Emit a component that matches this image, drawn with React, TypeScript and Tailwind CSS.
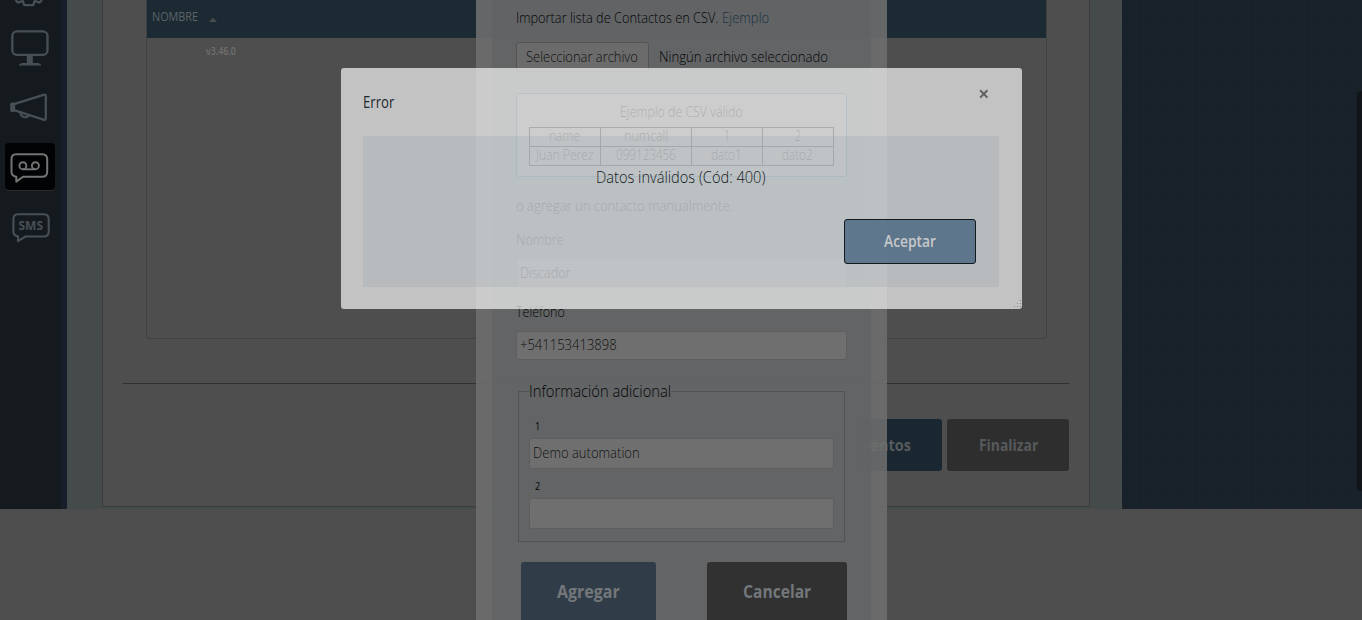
import { useLayoutEffect, useRef, useState, type ReactNode } from "react";

/** A line of text condensed horizontally so that it fills the given width. */
function Fit({ w, className = "", children }: { w: number; className?: string; children: ReactNode }) {
  const ref = useRef<HTMLSpanElement>(null);
  const [scale, setScale] = useState(1);
  useLayoutEffect(() => {
    if (ref.current) setScale(w / ref.current.offsetWidth);
  }, [w]);
  return (
    <span className={`inline-flex shrink-0 whitespace-nowrap ${className}`} style={{ width: w }}>
      <span ref={ref} className="inline-block origin-left shrink-0" style={{ transform: `scaleX(${scale})` }}>
        {children}
      </span>
    </span>
  );
}

function Sidebar() {
  return (
    <nav className="relative h-full w-[61px] shrink-0 bg-[#141a1e]">
      <svg width="61" height="260" viewBox="0 0 61 260" fill="none" stroke="#495055" strokeWidth="2.3" strokeLinejoin="round">
        <path d="M15.5 0l2.2 2.6 5-1.6 1.6 4.1h8.8l1.6-4.1 5 1.6L42 0" />
        <rect x="12.3" y="31.4" width="35.2" height="23.4" rx="4.5" />
        <path d="M29.8 56v8" strokeWidth="6" />
        <path d="M18.5 65.5c1-2 3-2.5 5-2.5h13c2 0 4 .5 5 2.5z" fill="#495055" stroke="none" />
        <path d="M14 104.2L43.5 94.8q2.3-.6 2.3 1.2v22.6q0 1.8-2.3 1.1L14 110.2z" />
        <path d="M10.2 104q0-1.5 2-1.5H14v9.5h-1.8q-2 0-2-1.6z" fill="#495055" stroke="none" />
        <path d="M20.4 112.5c.4 5.8 8 5.8 8.6 2.3" />
        <rect x="5" y="144" width="50" height="47" rx="4" fill="#282a2b" stroke="none" />
        <rect x="5" y="143" width="50" height="47" rx="4" fill="#020304" stroke="none" />
        <path
          d="M16 154.2h26.2q5 0 5 5v12.6q0 5-5 5H23l-6.7 4.8v-4.9q-4.8-.6-4.8-4.9v-12.6q0-5 4.5-5z"
          stroke="#747474"
          strokeWidth="2"
        />
        <g stroke="#747474" strokeWidth="1.9">
          <circle cx="22.9" cy="165.7" r="3.5" />
          <circle cx="35.4" cy="165.7" r="3.5" />
          <path d="M22.9 169.3h12.5" />
        </g>
        <path d="M17.8 214.3h26q4.9 0 4.9 5v12.2q0 5-4.9 5H25.5l-7.5 4.6v-4.7q-4.6-.7-4.6-4.9v-12.2q0-5 4.4-5z" strokeWidth="2.1" />
      </svg>
      <Fit w={25} className="absolute left-[18.5px] top-[217px] text-[12px]/[17px] font-bold text-[#495055]">
        SMS
      </Fit>
    </nav>
  );
}

function Page() {
  return (
    <div className="flex h-[509px] w-full bg-[#18202a]">
      <Sidebar />
      <div className="w-1.5 shrink-0 bg-[#181f2b]" />
      <main className="flex w-[1055px] shrink-0 bg-[#454a4a] pl-[35px]">
        <section className="h-[507px] w-[988px] border border-t-0 border-[#3b3d3d] bg-[#4e4e4e] px-5">
          <div className="ml-[23px] h-[339px] w-[901px] rounded-b border border-t-0 border-[#414141]">
            <div className="flex h-[38px] items-center bg-[#1c2a33] pb-1 pl-[5px] text-xs text-[#5d6468]">
              <Fit w={46}>NOMBRE</Fit>
              <svg width="8" height="4" className="ml-[11px] mt-[5px]">
                <path d="M0 4L4 0l4 4z" fill="#4b4e4e" />
              </svg>
            </div>
            <div className="flex pl-[59px] pt-1.5 text-[10px]/[14px] font-semibold text-[#707070]">
              <Fit w={30}>v3.46.0</Fit>
            </div>
          </div>
          <div className="mt-11 h-px bg-[#303030]" />
          <div className="mt-[35px] flex h-[52px] justify-end gap-[5px] text-base font-bold text-[#565a5c]">
            <div className="flex w-[81px] items-center justify-end rounded-[3px] bg-[#1a2731] pr-[31px]">
              <Fit w={57}>Eventos</Fit>
            </div>
            <div className="flex w-[122px] items-center justify-center rounded-[3px] bg-[#2e2e2e]">
              <Fit w={59}>Finalizar</Fit>
            </div>
          </div>
        </section>
      </main>
      <aside className="flex grow justify-end bg-[repeating-linear-gradient(0deg,#ffffff02_0_1px,transparent_1px_11px),repeating-linear-gradient(90deg,#ffffff02_0_1px,transparent_1px_7px)] pt-[91px]">
        <div className="h-[400px] w-[5px] rounded-l-sm bg-[#121518]" />
      </aside>
    </div>
  );
}

const cell = "flex items-center justify-center border-b border-r border-black pb-0.5";

function ContactForm() {
  return (
    <div className="absolute left-[476px] top-0 h-[620px] w-[411px] overflow-hidden bg-[#6e6e6ee0] px-4">
      <div className="flex h-full w-[379px] flex-col bg-[#606365cc] pl-[23.5px] pr-6 pt-px text-[15px] font-light text-[#050505] [&>*]:shrink-0">
        <div className="flex h-[34px] items-center gap-1 pb-0.5">
          <Fit w={202}>Importar lista de Contactos en CSV.</Fit>
          <Fit w={47} className="text-[#1a3243]">Ejemplo</Fit>
        </div>
        <div className="mt-[7px] flex h-[30px] items-center">
          <div className="mr-[10px] flex h-[30px] w-[133px] shrink-0 items-center justify-center rounded-[3px] border border-[#545454] bg-[#6b6b6b] pb-0.5 text-[#111111]">
            <Fit w={112}>Seleccionar archivo</Fit>
          </div>
          <Fit w={169} className="pb-0.5">Ningún archivo seleccionado</Fit>
        </div>
        <div className="mt-[21px] flex h-[84px] w-[331px] flex-col items-center rounded-[3px] border border-[#26485a] bg-[#707070] pt-2 text-[14.5px] text-black">
          <div className="flex h-[22px] items-center pb-0.5">
            <Fit w={123}>Ejemplo de CSV válido</Fit>
          </div>
          <div className="mt-[3px] grid h-[39px] w-[305px] shrink-0 grid-cols-[71px_91px_71px_71px] grid-rows-[19px_19px] border-l border-t border-black text-[14px]/[16px]">
            <div className={cell}><Fit w={31}>name</Fit></div>
            <div className={cell}><Fit w={44}>numcall</Fit></div>
            <div className={cell}><Fit w={6}>1</Fit></div>
            <div className={cell}><Fit w={6}>2</Fit></div>
            <div className={cell}><Fit w={58}>Juan Perez</Fit></div>
            <div className={cell}><Fit w={60}>099123456</Fit></div>
            <div className={cell}><Fit w={31}>dato1</Fit></div>
            <div className={cell}><Fit w={31}>dato2</Fit></div>
          </div>
        </div>
        <div className="mt-[17px] flex h-6 items-center pb-0.5 text-black"><Fit w={217}>o agregar un contacto manualmente.</Fit></div>
        <div className="mt-[10px] flex h-6 items-center pb-0.5 text-black"><Fit w={48}>Nombre</Fit></div>
        <div className="mt-[6px] flex h-[30px] w-[331px] items-center rounded-[3px] border border-[#5e5e60] bg-[#6f6f6f] pb-0.5 pl-[3px] text-black">
          <Fit w={51}>Discador</Fit>
        </div>
        <div className="mt-3 flex h-6 items-center pb-0.5"><Fit w={49}>Teléfono</Fit></div>
        <div className="mt-[7px] flex h-[29px] w-[331px] items-center rounded-[3px] border border-[#5e5e60] bg-[#6f6f6f] pb-0.5 pl-[3px] text-[14.5px] text-[#111111]">
          <Fit w={97}>+541153413898</Fit>
        </div>
        <fieldset className="ml-[2px] mt-[19px] flex h-[163px] w-[327px] flex-col border border-[#525355] pl-[10px]">
          <legend className="flex h-[25px] items-center pb-0.5 text-[17px] font-light">
            <Fit w={142}>Información adicional</Fit>
          </legend>
          <div className="mt-3 flex h-5 items-center pl-1.5 text-[11px] font-normal"><Fit w={5}>1</Fit></div>
          <div className="mt-[2px] flex h-[31px] w-[305px] shrink-0 items-center rounded-[3px] border border-[#5e5e60] bg-[#6f6f6f] pb-[3px] pl-[3px] text-[#111111]">
            <Fit w={107}>Demo automation</Fit>
          </div>
          <div className="mt-[7px] flex h-5 items-center pl-1.5 text-[11px] font-normal"><Fit w={5}>2</Fit></div>
          <div className="mt-[2px] h-[31px] w-[305px] shrink-0 rounded-[3px] border border-[#5e5e60] bg-[#6f6f6f]" />
        </fieldset>
        <div className="mt-5 flex justify-between pl-[5px] text-[17px] font-bold text-[#73777a]">
          <div className="flex h-[60px] w-[135px] items-center justify-center rounded-[3px] bg-[#303d49]">
            <Fit w={63}>Agregar</Fit>
          </div>
          <div className="flex h-[60px] w-[140px] items-center justify-center rounded-[3px] bg-[#313131]">
            <Fit w={68}>Cancelar</Fit>
          </div>
        </div>
      </div>
    </div>
  );
}

function ErrorDialog() {
  return (
    <div
      role="alertdialog"
      className="absolute left-[341px] top-[68px] flex h-[241px] w-[681px] flex-col rounded-[3px] bg-[#f5f5f5b3] pl-[22px] pr-[23px]"
    >
      <header className="flex h-[68px] items-center justify-between pr-[10px]">
        <Fit w={31} className="text-[16.5px] text-[#1d2731]">Error</Fit>
        <svg width="10" height="10" viewBox="0 0 10 10" className="mb-[17px]" stroke="#606060" strokeWidth="2">
          <path d="M1.2 1.2l7.2 7.4M8.4 1.2L1.2 8.6" />
        </svg>
      </header>
      <div className="flex h-[151px] flex-col bg-[#879daa33]">
        <p className="flex h-[83px] items-center justify-center pr-0.5 text-[16.5px] font-light text-[#151b22]">
          <Fit w={169}>Datos inválidos (Cód: 400)</Fit>
        </p>
        <button className="mr-[23px] flex h-[45px] w-[132px] items-center justify-center self-end rounded-[3px] border border-[#14191d] bg-[#4f6a82d9] pb-0.5 text-[17px] font-semibold text-[#c6c8ca]">
          <Fit w={52}>Aceptar</Fit>
        </button>
      </div>
      <svg width="9" height="9" className="absolute bottom-0 right-0" fill="#858585">
        <path d="M7 0h1v1H7zM4 3h1v1H4zM7 3h1v1H7zM1 6h1v1H1zM4 6h1v1H4zM7 6h1v1H7z" />
      </svg>
    </div>
  );
}

export default function App() {
  return (
    <div className="relative h-[620px] w-full overflow-hidden bg-[#4e4e4e] font-['Open_Sans','Noto_Sans',sans-serif]">
      <Page />
      <ContactForm />
      <ErrorDialog />
    </div>
  );
}
